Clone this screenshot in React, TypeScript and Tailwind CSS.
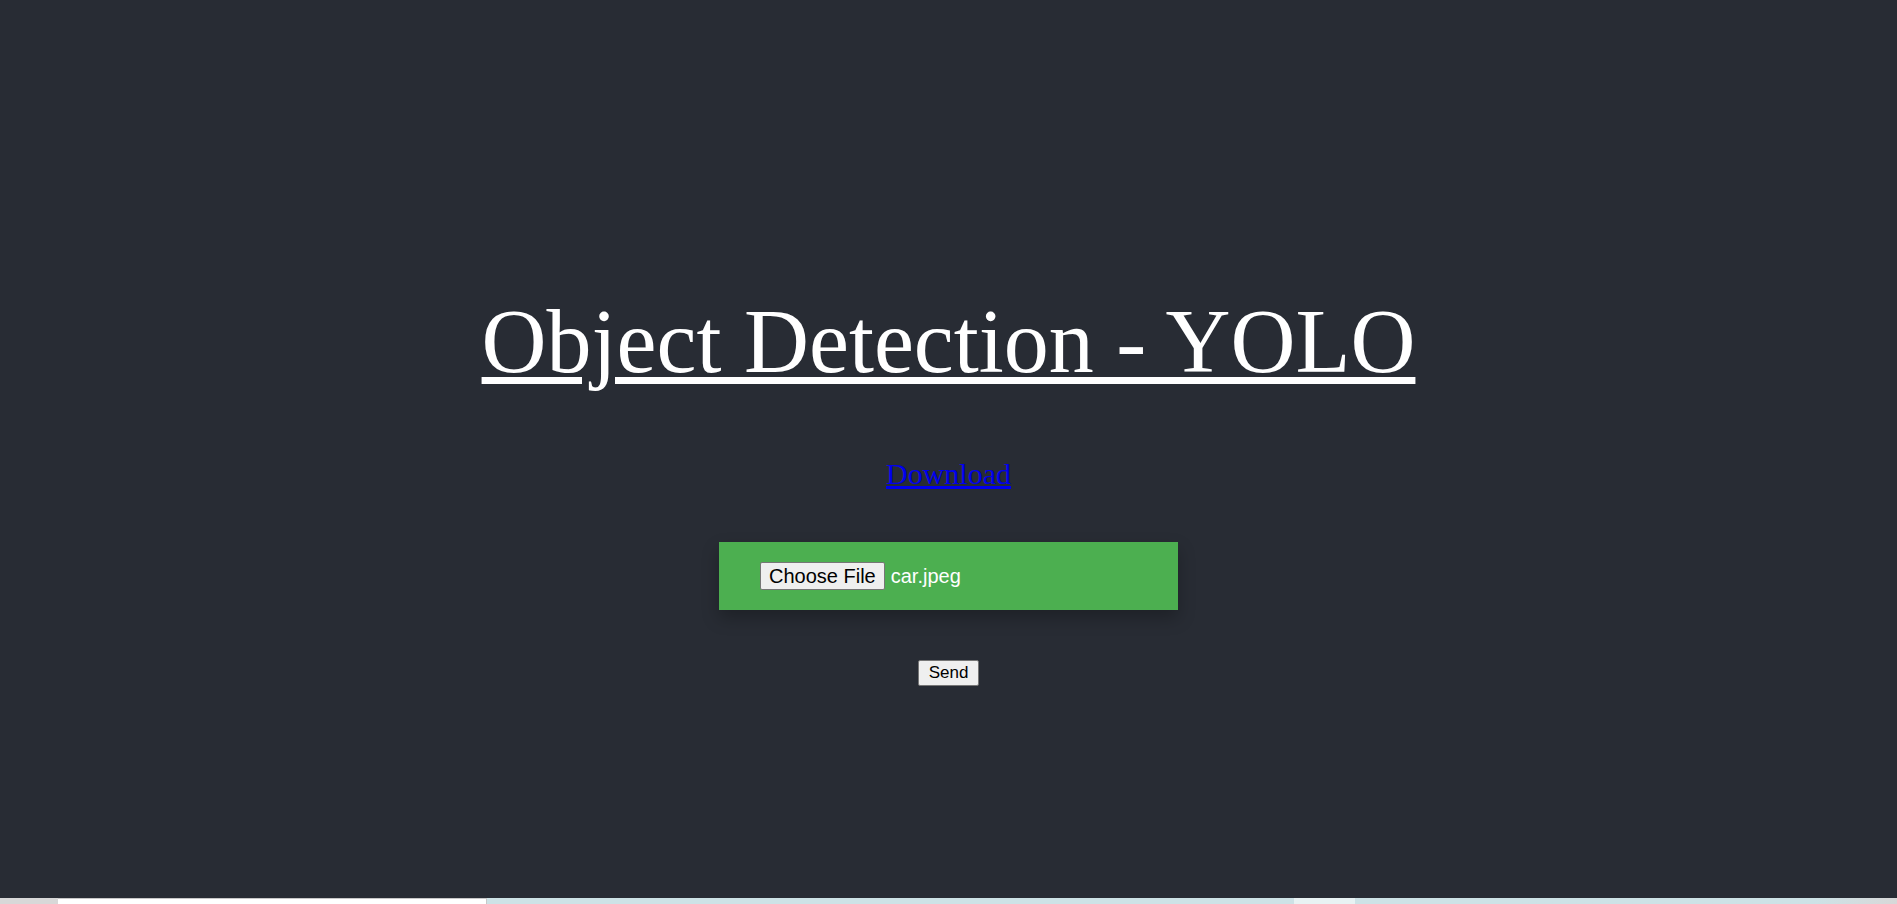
export default function App() {
  return (
    <div className="min-h-screen w-full bg-[#282c34] flex flex-col">
      <div className="h-[898px] flex flex-col items-center pt-[292px]">
        <h1
          className="text-[90px] leading-[100px] text-white underline decoration-[7px] underline-offset-[5px] font-normal"
          style={{ fontFamily: '"Liberation Serif", "Times New Roman", serif' }}
        >
          Object Detection - YOLO
        </h1>
        <a
          href="#"
          className="mt-[65px] text-[30px] leading-[34px] text-[#0000ee] underline"
          style={{ fontFamily: '"Liberation Serif", "Times New Roman", serif' }}
        >
          Download
        </a>
        <div
          className="mt-[51px] w-[459px] h-[68px] bg-[#4caf50] px-[41px] flex items-center gap-[6px] shadow-[0_8px_16px_0_rgba(0,0,0,0.25)]"
          style={{ fontFamily: '"Liberation Sans", Arial, sans-serif' }}
        >
          <button className="h-[28px] px-[8px] bg-[#efefef] border border-[#767676] rounded-[2px] text-[20px] leading-[24px] text-black">
            Choose File
          </button>
          <span className="text-[20px] text-white">car.jpeg</span>
        </div>
        <button
          className="mt-[50px] h-[26px] px-[10px] bg-[#efefef] border border-[#767676] rounded-[2px] text-[17px] leading-[20px] text-black"
          style={{ fontFamily: '"Liberation Sans", Arial, sans-serif' }}
        >
          Send
        </button>
      </div>
      <div className="h-[6px] flex w-full">
        <div className="w-[58px] bg-[#d8d8d8]" />
        <div className="w-[429px] bg-white border-t border-r border-[#c8c8c8]" />
        <div className="w-[807px] bg-[#cde2e6]" />
        <div className="w-[61px] bg-[#e8f2f3]" />
        <div className="flex-1 bg-gradient-to-r from-[#cde2e6] from-[85%] to-[#d8d8d8]" />
      </div>
    </div>
  );
}
